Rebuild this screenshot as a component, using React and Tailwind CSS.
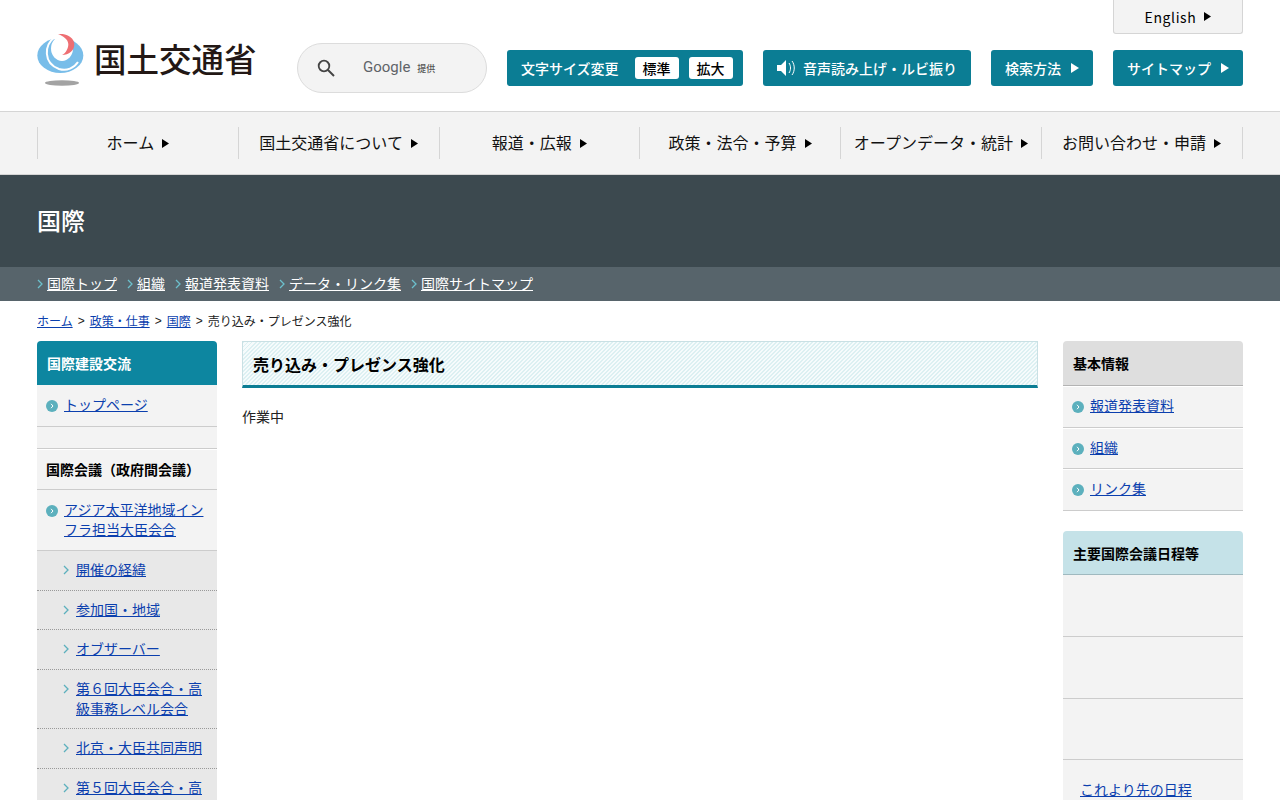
import React from 'react';

const navItems = ['ホーム', '国土交通省について', '報道・広報', '政策・法令・予算', 'オープンデータ・統計', 'お問い合わせ・申請'];
const subNav = ['国際トップ', '組織', '報道発表資料', 'データ・リンク集', '国際サイトマップ'];

const Tri = ({ className = '' }) => (
  <svg width="7" height="9" viewBox="0 0 7 9" className={`inline-block shrink-0 ${className}`}>
    <path d="M0 0 L7 4.5 L0 9 Z" fill="currentColor" />
  </svg>
);

const BtnTri = () => (
  <svg width="8" height="10" viewBox="0 0 8 10" className="shrink-0">
    <path d="M0 0 L8 5 L0 10 Z" fill="currentColor" />
  </svg>
);

const Chevron = ({ className = '' }) => (
  <svg width="6" height="10" viewBox="0 0 6 10" className={`shrink-0 ${className}`}>
    <path d="M1 1 L5 5 L1 9" fill="none" stroke="currentColor" strokeWidth="1.3" />
  </svg>
);

const Bullet = () => (
  <span className="mt-[5px] flex h-3 w-3 shrink-0 items-center justify-center rounded-full bg-[#5cb0bd] text-white">
    <svg width="4" height="6" viewBox="0 0 4 6"><path d="M1 .8 L3 3 L1 5.2" fill="none" stroke="currentColor" strokeWidth="1" /></svg>
  </span>
);

const Logo = () => (
  <div className="flex h-[52px] w-[249px] shrink-0 items-start">
    <svg width="50" height="52" viewBox="0 0 50 52" className="shrink-0">
      <ellipse cx="23.3" cy="21.5" rx="23" ry="17.5" fill="#78bde9" />
      {/* white sweep between the two blue bands */}
      <path d="M18 3 C7 11 6 29 22 35 C30 37.5 37 34 41 28" fill="none" stroke="#fff" strokeWidth="2" />
      {/* white centre and notch at the top */}
      <ellipse cx="25" cy="14.5" rx="11" ry="12.5" fill="#fff" />
      <path d="M17 0 H33 V5 H17 Z" fill="#fff" />
      {/* red crescent */}
      <path d="M21 0 C30 -1 37 4 37.3 10 C37.5 17 32 21 25 21 C29 19 31.5 14 31.3 10 C31 5 26 2 21 0 Z" fill="#ee6f73" />
      <ellipse cx="25" cy="49" rx="17" ry="2.7" fill="#a3a3a3" />
    </svg>
    <span className="ml-[7px] mt-[2px] whitespace-nowrap text-[32.5px] font-medium leading-[44px] text-[#231815]">国土交通省</span>
  </div>
);

const SearchBox = () => (
  <div className="ml-[11px] mt-[9px] flex h-[50px] w-[190px] shrink-0 items-center rounded-full border border-[#dcdcdc] bg-[#f3f3f3]">
    <svg width="18" height="18" viewBox="0 0 18 18" className="ml-[19px] shrink-0">
      <circle cx="7" cy="7" r="5.3" fill="none" stroke="#444" strokeWidth="1.8" />
      <path d="M11 11 L17 17" stroke="#444" strokeWidth="2" />
    </svg>
    <span className="mb-[2px] ml-[28px] text-[15px] leading-none text-[#5f6368] [font-family:'Roboto',sans-serif]">Google</span>
    <span className="ml-[7px] text-[9px] font-medium leading-none text-[#555]">提供</span>
  </div>
);

const TealBtn = ({ className = '', children }) => (
  <div className={`flex h-9 shrink-0 items-center rounded-[3px] bg-[#0b7d94] text-[14px] font-medium text-white ${className}`}>
    {children}
  </div>
);

const SizeChip = ({ children }) => (
  <span className="flex h-[22px] w-11 items-center justify-center rounded-[3px] bg-white text-[14px] font-medium text-black">{children}</span>
);

const SideLink = ({ children }) => (
  <a href="#" className="text-[14px] text-[#0b3fae] underline">{children}</a>
);

const MainItem = ({ children, className = '' }) => (
  <li className={`flex gap-[6px] border-b border-[#ccc] bg-[#f3f3f3] px-[9px] pt-[10px] leading-[19.6px] ${className}`}>
    <Bullet />
    <div><SideLink>{children}</SideLink></div>
  </li>
);

const SubItem = ({ children }) => (
  <li className="flex gap-[7px] border-b border-dotted border-[#999] bg-[#e8e8e8] pb-[10px] pl-[26px] pr-[9px] pt-[9px] leading-[19.6px]">
    <Chevron className="mt-[5px] text-[#5cb0bd]" />
    <div><SideLink>{children}</SideLink></div>
  </li>
);

const LeftSide = () => (
  <aside className="w-[180px] shrink-0">
    <h2 className="flex h-[44px] items-center rounded-t-[4px] bg-[#0d86a0] px-[10px] text-[14px] font-bold text-white">国際建設交流</h2>
    <ul>
      <MainItem className="h-[42px]">トップページ</MainItem>
    </ul>
    <div className="h-[22px] border-b border-[#ccc] bg-[#f3f3f3]" />
    <h3 className="flex h-[41px] items-center border-b border-t border-b-[#ccc] border-t-white bg-[#f3f3f3] px-[9px] text-[14px] font-bold text-black">国際会議（政府間会議）</h3>
    <ul>
      <MainItem className="h-[61.3px]">アジア太平洋地域インフラ担当大臣会合</MainItem>
      <SubItem>開催の経緯</SubItem>
      <SubItem>参加国・地域</SubItem>
      <SubItem>オブザーバー</SubItem>
      <SubItem>第６回大臣会合・高級事務レベル会合</SubItem>
      <SubItem>北京・大臣共同声明</SubItem>
      <SubItem>第５回大臣会合・高</SubItem>
    </ul>
  </aside>
);

const RightSide = () => (
  <aside className="w-[180px] shrink-0">
    <h2 className="flex h-[45px] items-center rounded-t-[4px] border-b border-[#b3b3b3] bg-[#dedede] px-[10px] text-[14px] font-bold text-black">基本情報</h2>
    <ul>
      {['報道発表資料', '組織', 'リンク集'].map((t) => (
        <li key={t} className="flex h-[41.5px] gap-[6px] border-b border-t border-b-[#ccc] border-t-white bg-[#f3f3f3] px-[9px] pt-[9px] leading-[19.6px]">
          <Bullet />
          <div><SideLink>{t}</SideLink></div>
        </li>
      ))}
    </ul>
    <h2 className="mt-[20px] flex h-[44px] items-center rounded-t-[4px] border-b border-[#9fb9bf] bg-[#c5e2e8] px-[10px] pt-[2px] text-[14px] font-bold text-black">主要国際会議日程等</h2>
    <div className="h-[62px] border-b border-[#ccc] bg-[#f3f3f3]" />
    <div className="h-[62px] border-b border-[#ccc] bg-[#f3f3f3]" />
    <div className="h-[61px] border-b border-[#ccc] bg-[#f3f3f3]" />
    <div className="bg-[#f3f3f3] pb-[10px] pl-[17px] pt-[20px] leading-[19.6px]"><SideLink>これより先の日程</SideLink></div>
  </aside>
);

const Crumb = ({ children }) => <a href="#" className="text-[#0b3fae] underline">{children}</a>;
const Sep = () => <span className="[font-family:'Liberation_Sans',sans-serif]">&gt;</span>;

export default function App() {
  return (
    <div className="h-[800px] overflow-hidden bg-white text-[14px] text-[#222] [font-family:'Noto_Sans_CJK_JP',sans-serif]">
      <header className="h-[111px] px-[37px]">
        <div className="flex justify-end">
          <div className="flex h-[34px] w-[130px] items-center justify-center gap-[8px] rounded-b-[3px] border border-t-0 border-[#d5d5d5] bg-[#f3f3f3] text-[14px] text-black">
            <span className="mt-[2px] tracking-[0.6px]">English</span><Tri className="text-black" />
          </div>
        </div>
        <div className="flex items-start">
          <Logo />
          <SearchBox />
          <div className="ml-[20px] mt-[16px] flex gap-5">
            <TealBtn className="w-[236px] pl-[14px]">
              <span>文字サイズ変更</span>
              <span className="ml-[16px] flex gap-[10px]"><SizeChip>標準</SizeChip><SizeChip>拡大</SizeChip></span>
            </TealBtn>
            <TealBtn className="w-[208px] pl-[14px]">
              <svg width="19" height="16" viewBox="0 0 19 16" className="shrink-0">
                <path d="M0 5 H4 L9 0 V16 L4 11 H0 Z" fill="#fff" />
                <path d="M12 3 C14 6 14 10 12 13 M15 1 C18 5 18 11 15 15" fill="none" stroke="#fff" strokeWidth="1" />
              </svg>
              <span className="ml-[7px]">音声読み上げ・ルビ振り</span>
            </TealBtn>
            <TealBtn className="w-[102px] justify-center gap-[10px]"><span>検索方法</span><BtnTri /></TealBtn>
            <TealBtn className="w-[130px] justify-center gap-[10px]"><span>サイトマップ</span><BtnTri /></TealBtn>
          </div>
        </div>
      </header>

      <nav className="h-[64px] border-y border-[#d5d5d5] bg-[#f3f3f3] pl-[37px] pr-[37.5px] pt-[15px]">
        <ul className="grid h-[32px] grid-cols-6 border-r border-[#d5d5d5]">
          {navItems.map((n) => (
            <li key={n} className="flex items-center justify-center gap-[8px] whitespace-nowrap border-l border-[#d5d5d5] text-[16px] text-[#111]">
              <span className="pb-[2px]">{n}</span><Tri className="text-black" />
            </li>
          ))}
        </ul>
      </nav>

      <div className="flex h-[92px] items-center bg-[#3c494f] px-[37px] pb-[2px]">
        <h1 className="text-[24px] font-medium text-white">国際</h1>
      </div>
      <ul className="flex h-[34px] items-center gap-[10px] bg-[#57646b] px-[37px]">
        {subNav.map((s) => (
          <li key={s} className="flex items-center gap-[4px]">
            <Chevron className="text-[#6cc0cc]" />
            <a href="#" className="mb-[2px] text-[14px] text-white underline">{s}</a>
          </li>
        ))}
      </ul>

      <div className="flex h-[40px] items-center gap-[5px] px-[37px] text-[12px] text-[#222]">
        <Crumb>ホーム</Crumb><Sep />
        <Crumb>政策・仕事</Crumb><Sep />
        <Crumb>国際</Crumb><Sep />
        <span>売り込み・プレゼンス強化</span>
      </div>

      <div className="flex items-start gap-[25px] px-[37px]">
        <LeftSide />
        <main className="min-w-0 flex-1">
          <h2 className="flex h-[47px] items-center border border-b-[3px] border-[#c9e0e4] border-b-[#0b7d94] bg-[repeating-linear-gradient(135deg,#dcf0f2_0,#dcf0f2_1.41px,#f6fbfc_1.41px,#f6fbfc_2.83px)] px-[10px] text-[16px] font-bold text-black">売り込み・プレゼンス強化</h2>
          <p className="mt-[19px] text-[14px] leading-[19.6px]">作業中</p>
        </main>
        <RightSide />
      </div>
    </div>
  );
}
